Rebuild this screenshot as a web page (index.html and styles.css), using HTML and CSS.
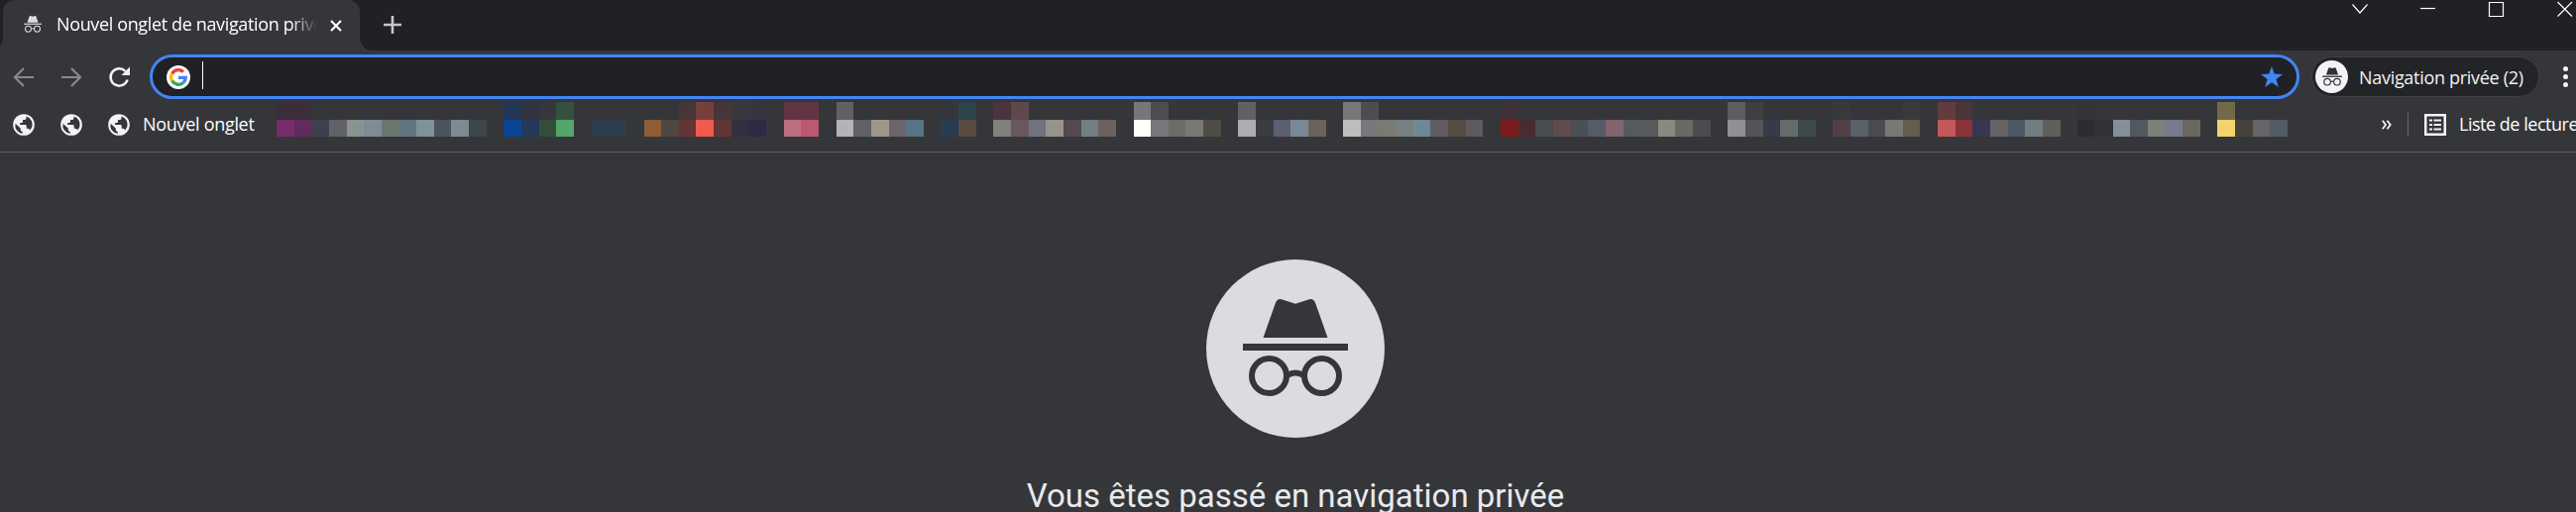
FILE: index.html
```html
<!DOCTYPE html>
<html lang="fr">
<head>
<meta charset="utf-8">
<title>Nouvel onglet de navigation privée</title>
<link rel="stylesheet" href="styles.css">
</head>
<body>
<svg class="defs" aria-hidden="true">
  <symbol id="spy" viewBox="0 0 106 112">
    <path d="M20.500 45 L32.500 11 Q34.500 5 39 6.300 L53 10.700 L67 6.300 Q71.500 5 73.500 11 L85.500 45Z"/>
    <rect x="0" y="51" width="106" height="7"/>
    <g fill="none" stroke="currentColor" stroke-width="6"><circle cx="26.500" cy="83.500" r="17.500"/><circle cx="79.500" cy="83.500" r="17.500"/><path d="M45 83 Q53 78 61 83"/></g>
  </symbol>
  <symbol id="globe" viewBox="0 0 24 24">
    <circle cx="12" cy="12" r="11.800" fill="#f1f3f4"/>
    <path fill="#35363a" d="M14.500 2.800 L14.800 4.500 Q14.800 6.200 13 6.500 H10.900 V8.700 Q10.900 9.700 9.700 9.700 H7.800 V12 H13.700 Q15 12 15 13.500 V16 H16.500 Q18 16 18.700 18 Q23 13 20.500 7.500 Q18.500 3.900 14.500 2.800Z M2.700 10.500 Q1.500 19.700 10.700 21.500 V19.500 Q8.300 19.300 8.400 17 V15.800Z"/>
  </symbol>
</svg>

<header class="tabstrip">
  <div class="tab">
    <svg class="tab-icon"><use href="#spy"/></svg>
    <span class="tab-title">Nouvel onglet de navigation privée</span>
    <svg class="tab-close" viewBox="0 0 12 12"><path d="M1 1 11 11M11 1 1 11"/></svg>
  </div>
  <svg class="new-tab" viewBox="0 0 18 18"><path d="M9 0V18M0 9H18"/></svg>
  <div class="window-controls">
    <svg viewBox="0 0 16 16"><path d="M.5 3.500 8 12 15.500 3.500"/></svg>
    <svg viewBox="0 0 16 16"><path d="M0 7.500H15"/></svg>
    <svg viewBox="0 0 16 16"><path d="M.5 1.500H14.500V15.500H.5Z"/></svg>
    <svg viewBox="0 0 16 16"><path d="M.5 1 15 15.500M15 1 .5 15.500"/></svg>
  </div>
</header>

<div class="toolbar">
  <svg class="nav" viewBox="0 0 20 20"><path d="M20 10H1.500M10 1 1 10 10 19"/></svg>
  <svg class="nav" viewBox="0 0 20 20"><path d="M0 10H18.500M10 1 19 10 10 19"/></svg>
  <svg class="reload" viewBox="0 0 22 22"><path class="arc" d="M18.600 13.500A8.700 8.700 0 1 1 16.500 4.800"/><path class="head" d="M21 .5V9H12.500Z"/></svg>
  <div class="omnibox">
    <svg class="google" viewBox="0 0 24 24">
      <circle cx="12" cy="12" r="12" fill="#fff"/>
      <g fill="none" stroke-width="3.300">
        <path stroke="#ea4335" d="M5.600 8.300A7.400 7.400 0 0 1 17 6.600"/>
        <path stroke="#fbbc05" d="M5.600 15.700A7.400 7.400 0 0 1 5.600 8.300"/>
        <path stroke="#34a853" d="M16.500 17.800A7.400 7.400 0 0 1 5.600 15.700"/>
        <path stroke="#4285f4" d="M12 12.300H19.300A7.400 7.400 0 0 1 16.500 17.800"/>
      </g>
    </svg>
    <span class="caret"></span>
    <svg class="star" viewBox="0 0 22 21"><path d="M11 0 13.700 7.600 22 7.900 15.500 12.900 17.800 21 11 16.300 4.200 21 6.500 12.900 0 7.900 8.300 7.600Z"/></svg>
  </div>
  <div class="profile">
    <span class="avatar"><svg><use href="#spy"/></svg></span>
    <span>Navigation privée (2)</span>
  </div>
  <div class="menu"><i></i><i></i><i></i></div>
</div>

<div class="bookmarks">
  <svg class="globe"><use href="#globe"/></svg>
  <svg class="globe"><use href="#globe"/></svg>
  <svg class="globe"><use href="#globe"/></svg>
  <span class="bookmark-label">Nouvel onglet</span>
  <div class="mosaic" id="mosaic"></div>
  <svg class="more" viewBox="0 0 10 10"><path d="M.8 .8 4 5 .8 9.200M5.500 .8 8.700 5 5.500 9.200"/></svg>
  <span class="divider"></span>
  <svg class="list" viewBox="0 0 22 22"><path class="frame" d="M1.250 1.250H20.750V20.750H1.250Z"/><path class="rows" d="M5 6.500H8M9.500 6.500H17M5 11H8M9.500 11H17M5 15.500H8M9.500 15.500H17"/></svg>
  <span class="list-label">Liste de lecture</span>
</div>

<main class="page">
  <div class="hero"><svg><use href="#spy"/></svg></div>
  <h1>Vous êtes passé en navigation privée</h1>
</main>
<script src="mosaic.js"></script>
</body>
</html>
```
FILE: styles.css
```css
* { box-sizing: border-box; }
body {
  margin: 0;
  height: 517px;
  overflow: hidden;
  background: #35363a;
  color: #f1f3f4;
  font: 18px/24px "Open Sans", "Noto Sans", sans-serif;
  white-space: nowrap;
}
svg { display: block; flex: none; overflow: visible; }
.defs { position: absolute; width: 0; height: 0; }

.tabstrip {
  display: flex;
  height: 51px;
  padding-left: 3px;
  background: #202124;
}
.tab {
  position: relative;
  display: flex;
  align-items: center;
  width: 360px;
  height: 51px;
  padding: 0 0 2px 21px;
  background: #35363a;
  border-radius: 12px 12px 0 0;
}
/* flared feet of the active tab */
.tab::before, .tab::after {
  content: "";
  position: absolute;
  bottom: 0;
  width: 12px;
  height: 12px;
}
.tab::before { right: 100%; background: radial-gradient(circle at 0 0, transparent 11.5px, #35363a 12px); }
.tab::after { left: 100%; background: radial-gradient(circle at 100% 0, transparent 11.5px, #35363a 12px); }
.tab-icon { width: 18px; height: 19px; color: #dadce0; fill: currentColor; }
.tab-title {
  width: 263px;
  margin: -1px 0 0 15px;
  overflow: hidden;
  color: #fff;
  letter-spacing: -.36px;
  -webkit-mask-image: linear-gradient(90deg, #000 236px, transparent 263px);
  mask-image: linear-gradient(90deg, #000 236px, transparent 263px);
}
.tab-close { width: 12px; height: 12px; margin: 2px 0 0 13px; fill: none; stroke: #fff; stroke-width: 2.2; }
.new-tab { width: 18px; height: 18px; margin: 16px 0 0 24px; stroke: #c4c6c9; stroke-width: 2.6; }
.window-controls { display: flex; gap: 53px; margin: 1px 3px 0 auto; }
.window-controls svg { width: 16px; height: 16px; fill: none; stroke: #fff; stroke-width: 1.2; }

.toolbar { display: flex; align-items: center; height: 53px; padding-left: 14px; }
.nav { width: 20px; height: 20px; margin-right: 28px; fill: none; stroke: #88898c; stroke-width: 2.2; }
.reload { width: 22px; height: 22px; }
.reload .arc { fill: none; stroke: #f1f3f4; stroke-width: 2.5; }
.reload .head { fill: #f1f3f4; }
.omnibox {
  display: flex;
  align-items: center;
  flex: none;
  width: 2169px;
  height: 45px;
  margin-left: 19px;
  padding: 0 14px;
  border: 3px solid #4285f4;
  border-radius: 23px;
  background: #202124;
}
.google { width: 24px; height: 24px; }
.caret { width: 1px; height: 28px; margin: -4px 0 0 12px; background: #fff; }
.star { width: 22px; height: 21px; margin-left: auto; fill: #4285f4; }
.profile {
  display: flex;
  align-items: center;
  flex: none;
  width: 230px;
  height: 41px;
  margin-left: 12px;
  padding-left: 3px;
  border: 1px solid #3f4044;
  border-radius: 21px;
  background: #232428;
  letter-spacing: -.3px;
}
.avatar {
  display: grid;
  place-items: center;
  width: 33px;
  height: 33px;
  margin-right: 11px;
  border-radius: 50%;
  background: #f1f3f4;
}
.avatar svg { width: 20px; height: 21px; fill: currentColor; color: #303135; }
.menu { display: grid; gap: 3px; margin-left: 24px; }
.menu i { width: 5px; height: 5px; border-radius: 50%; background: #f1f3f4; }

.bookmarks {
  display: flex;
  align-items: center;
  height: 50px;
  padding: 0 0 5px 13px;
  border-bottom: 1px solid #5f6165;
}
.bookmarks > * { flex: none; }
.globe { width: 22px; height: 22px; margin-right: 26px; }
.bookmark-label { width: 135px; margin: -2px 0 0 -13px; color: #fff; letter-spacing: -.3px; }
.mosaic {
  display: grid;
  grid-template: 18px 17px / repeat(115, 1fr);
  align-self: flex-start;
  width: 2029px;
  margin-top: -1px;
}
.more { width: 10px; height: 10px; margin-left: 95px; fill: none; stroke: #f1f3f4; stroke-width: 1.8; }
.divider { width: 1px; height: 24px; margin-left: 16px; background: #6b6c70; }
.list { width: 22px; height: 22px; margin: 0 13px 0 16px; fill: none; stroke: #f1f3f4; }
.list .frame { stroke-width: 2.5; }
.list .rows { stroke-width: 2; }
.list-label { margin-top: -2px; color: #fff; letter-spacing: -.48px; }

.page { display: flex; flex-direction: column; align-items: center; padding: 108px 0 0 15px; }
.hero { display: grid; place-items: center; width: 180px; height: 180px; border-radius: 50%; background: #dadce0; }
.hero svg { width: 106px; height: 112px; fill: currentColor; color: #35363a; }
h1 { margin: 38px 0 0; font: 400 33px/42px Roboto, sans-serif; color: #e8eaed; }
```
FILE: mosaic.js
```js
// Colour swatches of the bookmark strip; "-" leaves a column empty.
const lower = `772d6c 632a5c 3d414d 626166 89948f 7e8c96 6b756f 637481 809299 4c525c 7c8b90 3c464b -
0c4494 24385a 344d3c 53a669 - 2e3d4d 2d3d4b - 8d5d36 4e473f 633534 f15b4d 623534 32303f 2c2a44 -
bd6f81 bc5870 - b3b4b6 606164 a0978b 6b6567 567484 - 293c52 594a41 -
80817a 6b5760 70737e 95938b 56484f 708080 6d615e - fffef8 777779 6b6d67 777875 4f4c45 -
acadaf 3c3d40 5c5f6f 7a8993 69635b - bebebe 777879 7b7a70 778081 6f8994 605d62 544b43 5d5b5b -
7a1b1e 4a2c30 484b4f 5f4c4c 4a4f53 555b69 826370 555a61 58595d 8b887f 676964 4b4c4f -
8f9093 535457 39394c 656b6c 3e484f - 514044 596169 4b4c50 7a7872 635d4c -
c35858 883438 373754 666265 4c5863 717d7e 5f5e59 - 2c2d30 333337 858f9b 51595f 7d7f78 7a7a8e 6d6761 -
f2d36d 44423b 696466 535c65`.split(/\s+/);
const upper = {
  0: "3b2d39", 1: "3b2d39", 13: "243655", 14: "303541", 15: "37363a", 16: "34513f",
  23: "463638", 24: "763f3c", 25: "463638", 26: "37383b", 27: "353640", 29: "613642", 30: "613642",
  32: "606164", 39: "2d444f", 41: "4b353c", 42: "5f484b", 49: "777779", 50: "4c4d50", 55: "606164",
  61: "777879", 62: "4c4d50", 70: "3f3337", 83: "5d5e61", 84: "3e3f42", 89: "38393c", 93: "3b393e",
  95: "613b3e", 96: "4a3539", 103: "333438", 111: "71694a"
};
const mosaic = document.getElementById("mosaic");
const add = (hex) => {
  const cell = document.createElement("span");
  if (hex && hex !== "-") cell.style.background = "#" + hex;
  mosaic.append(cell);
};
lower.forEach((_, i) => add(upper[i]));
lower.forEach(add);
```
